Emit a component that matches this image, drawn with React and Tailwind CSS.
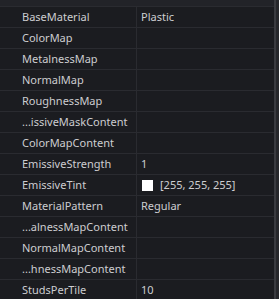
import React from 'react';

const rows = [
  { name: 'BaseMaterial', value: 'Plastic' },
  { name: 'ColorMap' },
  { name: 'MetalnessMap' },
  { name: 'NormalMap' },
  { name: 'RoughnessMap' },
  { name: '...issiveMaskContent' },
  { name: 'ColorMapContent' },
  { name: 'EmissiveStrength', value: '1' },
  { name: 'EmissiveTint', value: '[255, 255, 255]', swatch: true },
  { name: 'MaterialPattern', value: 'Regular' },
  { name: '...alnessMapContent' },
  { name: 'NormalMapContent' },
  { name: '...hnessMapContent' },
  { name: 'StudsPerTile', value: '10' },
];

export default function App() {
  return (
    <div
      className="flex h-[299px] w-[279px] overflow-hidden bg-[#1b1c20] text-[11px] text-[#cdcdd0]"
      style={{ fontFamily: '"Noto Sans", sans-serif' }}
    >
      <div className="flex min-w-0 flex-1 flex-col">
        <div className="h-[7px] shrink-0 border-b border-[#2a2b30] bg-[#222328]" />
        {rows.map((row) => (
          <div key={row.name} className="flex h-[21px] shrink-0 border-b border-[#2a2b30]">
            <div className="flex w-[137px] shrink-0 items-center border-r border-[#2a2b30] pl-[22px] whitespace-nowrap">
              {row.name}
            </div>
            <div className="flex flex-1 items-center gap-[7px] pl-[4px] whitespace-nowrap">
              {row.swatch && <span className="ml-[1px] h-[11px] w-[11px] bg-white" />}
              {row.value}
            </div>
          </div>
        ))}
      </div>
      <div className="w-[5px] shrink-0 border-l-2 border-[#3a3b40] bg-[#26272b]" />
    </div>
  );
}
